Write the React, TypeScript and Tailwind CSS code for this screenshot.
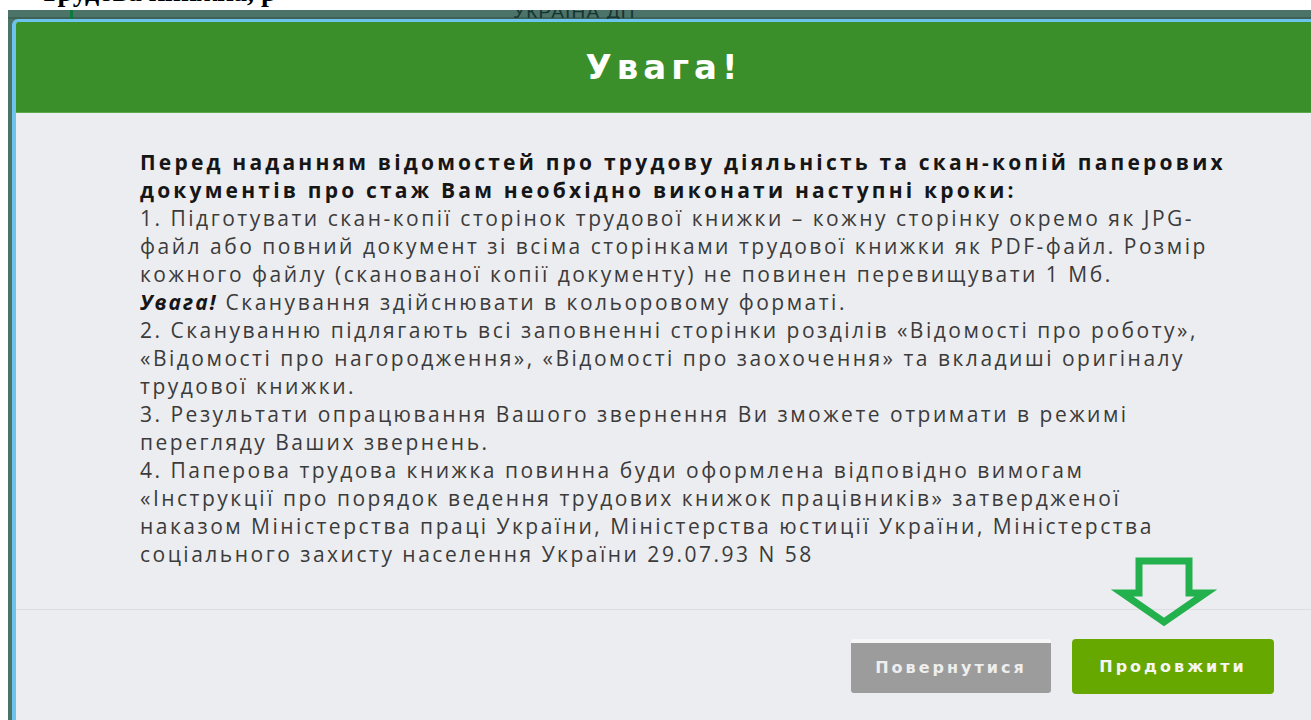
import { ReactNode } from "react"

const bodyFont = "font-['Open_Sans','Noto_Sans',sans-serif]"
const boldFont = "font-['DejaVu_Sans','Verdana',sans-serif]"

// Rows of the instructions block, kept line by line
const steps: ReactNode[] = [
    "1. Підготувати скан-копії сторінок трудової книжки – кожну сторінку окремо як JPG-",
    "файл або повний документ зі всіма сторінками трудової книжки як PDF-файл. Розмір",
    "кожного файлу (сканованої копії документу) не повинен перевищувати 1 Мб.",
    <><b className="italic tracking-[2px] text-[#161616]">Увага!</b> Сканування здійснювати в кольоровому форматі.</>,
    "2. Скануванню підлягають всі заповненні сторінки розділів «Відомості про роботу»,",
    "«Відомості про нагородження», «Відомості про заохочення» та вкладиші оригіналу",
    "трудової книжки.",
    "3. Результати опрацювання Вашого звернення Ви зможете отримати в режимі",
    "перегляду Ваших звернень.",
    "4. Паперова трудова книжка повинна буди оформлена відповідно вимогам",
    "«Інструкції про порядок ведення трудових книжок працівників» затвердженої",
    "наказом Міністерства праці України, Міністерства юстиції України, Міністерства",
    "соціального захисту населення України 29.07.93 N 58",
]

function DownArrow() {
    return (
        <svg className="absolute left-[1100px] top-[545px]" width="130" height="95" viewBox="0 0 130 95">
            <polygon
                points="39,16 89,16 89,48 106,48 64,77 22,48 39,48"
                fill="none"
                stroke="#22b14c"
                strokeWidth="7"
                strokeLinejoin="miter"
            />
        </svg>
    )
}

export default function App() {
    return (
        <div className="relative h-[720px] w-[1311px] overflow-hidden bg-white">
            {/* page heading behind the overlay, mostly scrolled away */}
            <div className="h-[10px] overflow-hidden pl-[40px]">
                <div className="-mt-[24px] font-['Liberation_Serif',serif] text-[28px] font-bold leading-[32px] text-black">
                    Трудова книжка, р
                </div>
            </div>

            <div className="ml-2 h-full bg-[#4c7367]">
                <div className="flex h-[9px] overflow-hidden shadow-[inset_0_-2px_0_#3f6257]">
                    <div className="ml-[62px] h-full w-[3px] bg-[#0c7a3c]" />
                    <div className="-mt-[8px] ml-[440px] font-['Liberation_Sans',sans-serif] text-[19px] leading-[20px] tracking-[1.2px] text-[#173434]">
                        УКРАЇНА ДП
                    </div>
                </div>

                <div className="ml-1 w-[1304px] overflow-hidden rounded-t-[6px] border-x-4 border-t-[3px] border-[#6cc4ec] bg-[#ecedf0]">
                    <div className="flex h-[91px] items-center justify-center border-b border-[#5ea84e] bg-[#3a8f2b]">
                        <h1 className={`${boldFont} text-[34px] font-bold tracking-[5px] text-white`}>
                            Увага!
                        </h1>
                    </div>

                    <div className={`${bodyFont} pb-[41px] pl-[124px] pt-[35px] text-[21px] leading-[28px] tracking-[2.5px] text-[#3b3b3b]`}>
                        <p className="whitespace-nowrap font-bold tracking-[3.2px] text-[#161616]">
                            Перед наданням відомостей про трудову діяльність та скан-копій паперових
                            <br />
                            документів про стаж Вам необхідно виконати наступні кроки:
                        </p>
                        {steps.map((line, i) => (
                            <div key={i} className="whitespace-nowrap">{line}</div>
                        ))}
                    </div>

                    <div className="flex h-[200px] items-start justify-end gap-[21px] border-t border-[#dcdde0] pr-[38px] pt-[29px]">
                        <button className={`${boldFont} h-[54px] w-[200px] rounded-[3px] border-t-4 border-[#f7f7f7] bg-[#9c9c9c] text-[16px] font-bold tracking-[3px] text-[#eeeeee]`}>
                            Повернутися
                        </button>
                        <button className={`${boldFont} h-[55px] w-[202px] rounded-[4px] bg-[#66a800] text-[16px] font-bold tracking-[3px] text-[#f5f5f5]`}>
                            Продовжити
                        </button>
                    </div>
                </div>
            </div>

            <DownArrow />
        </div>
    )
}
